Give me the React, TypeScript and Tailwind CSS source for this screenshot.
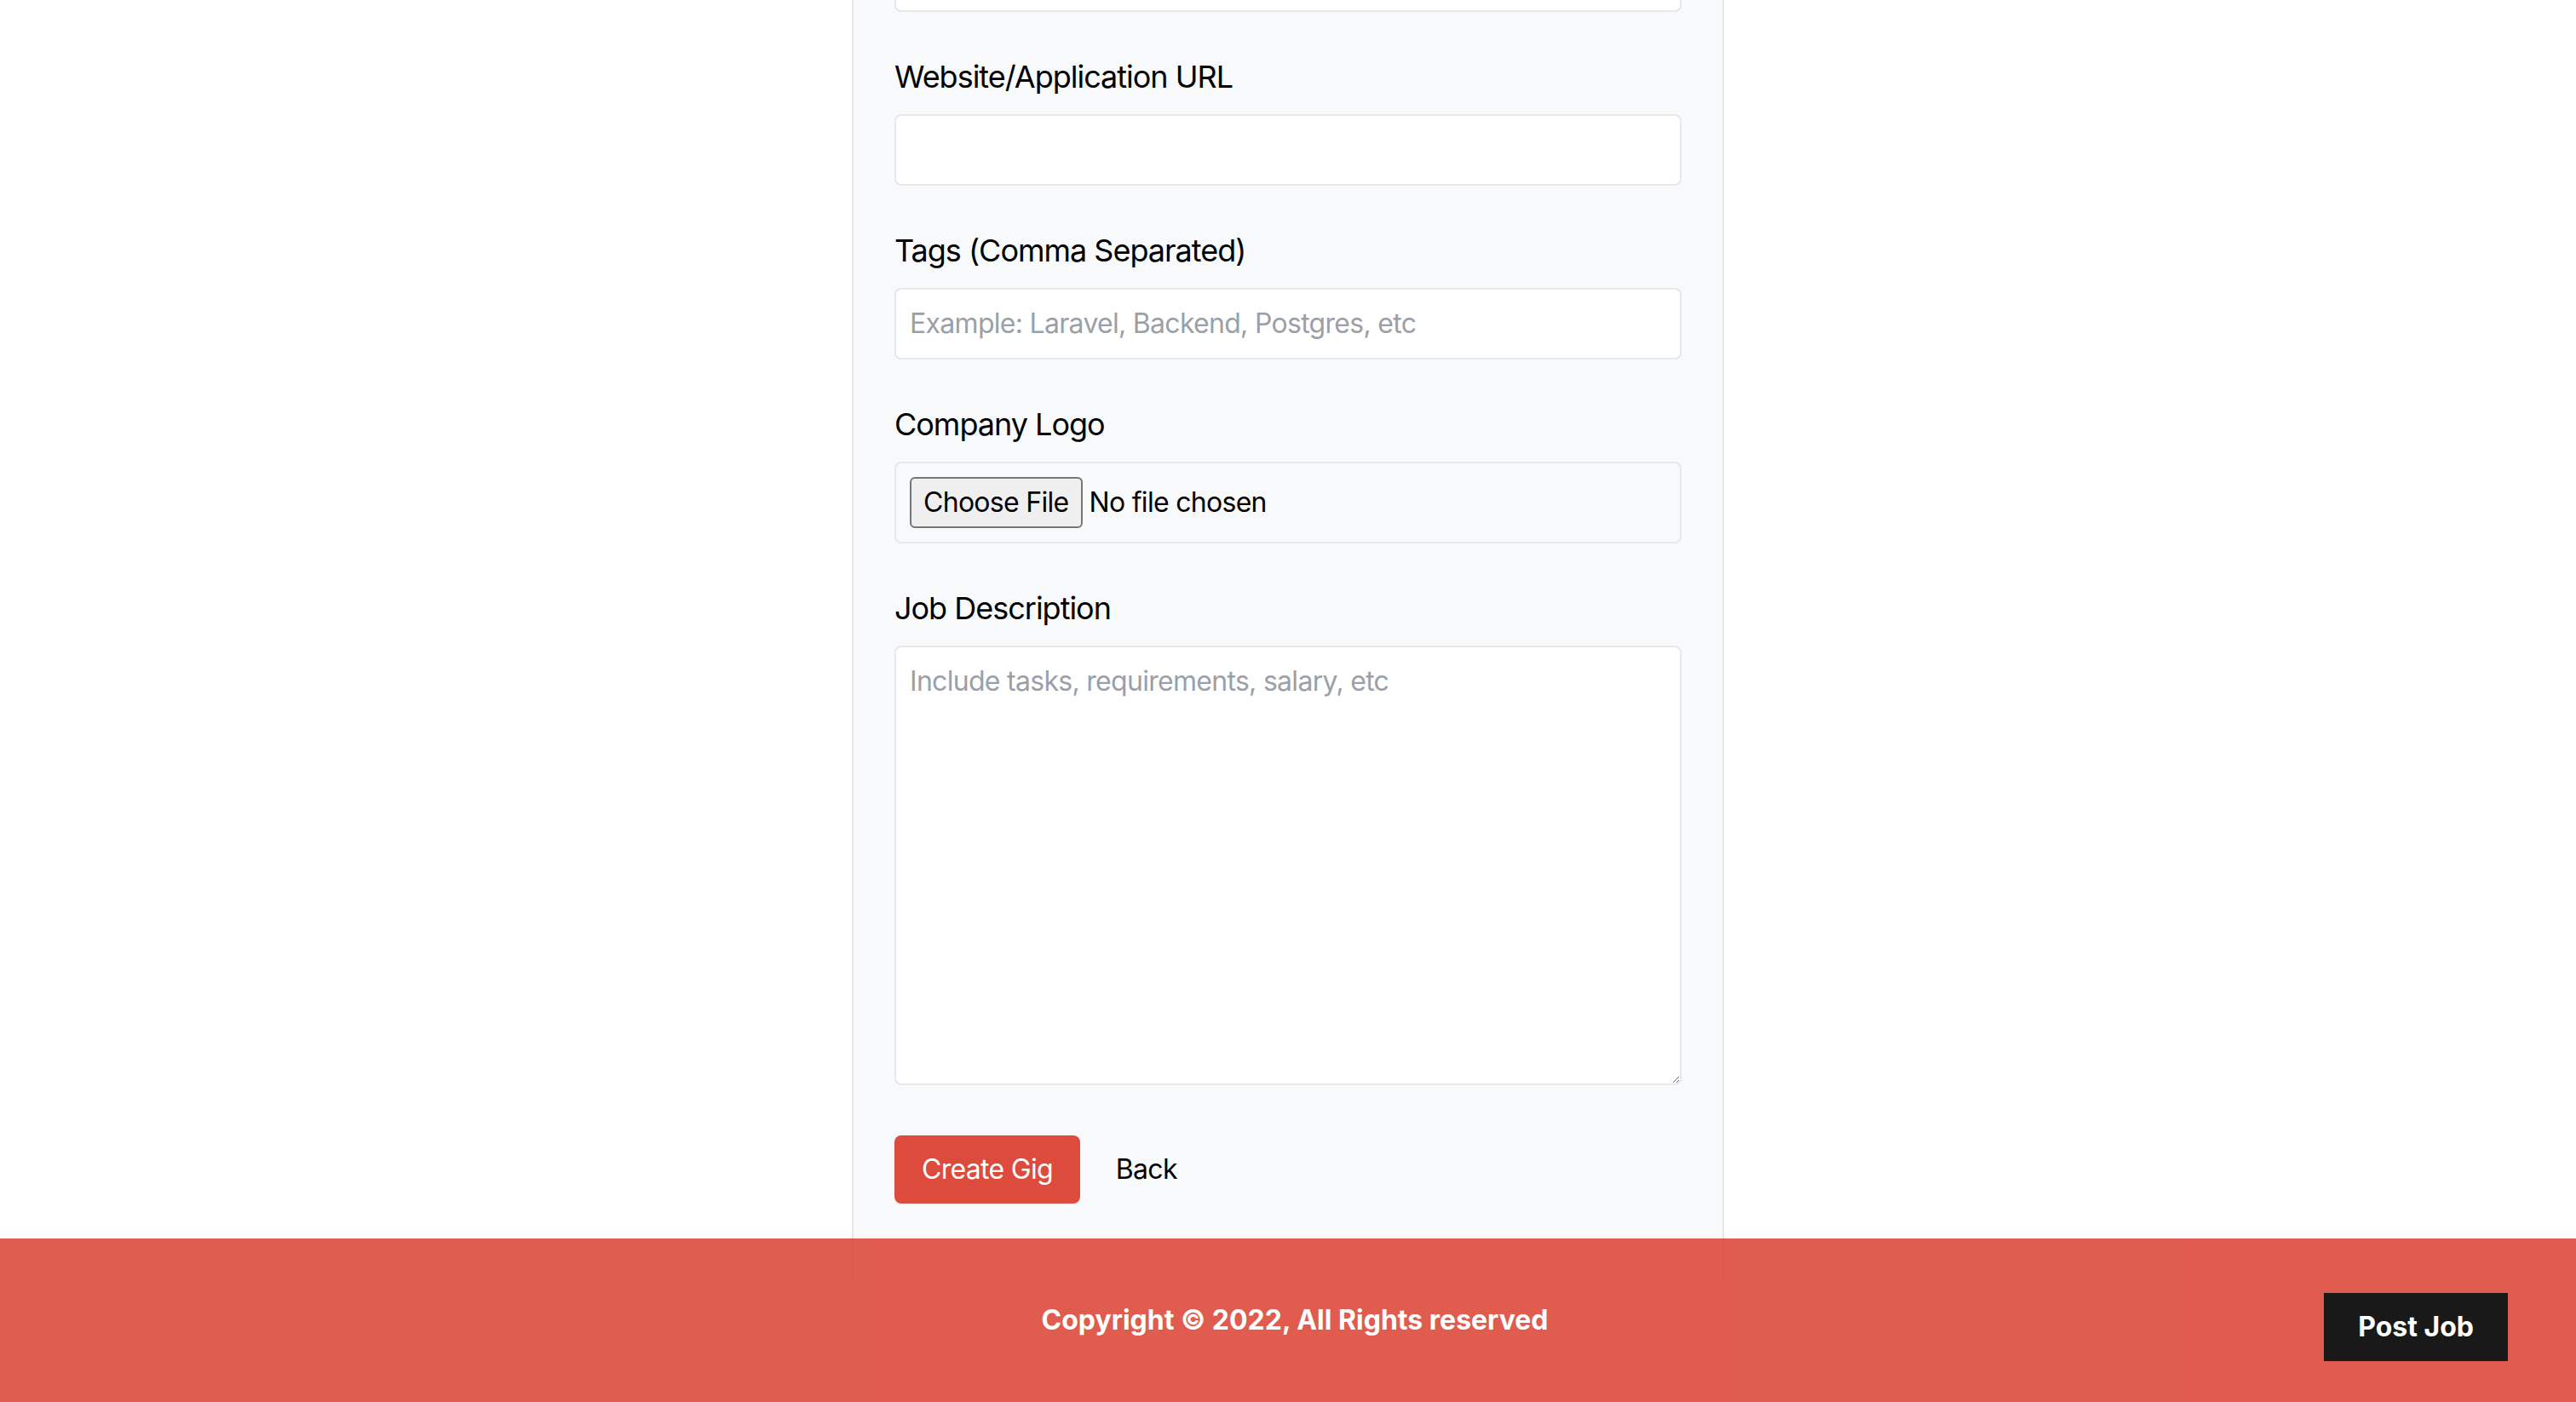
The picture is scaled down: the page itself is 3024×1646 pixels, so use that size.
import React from "react";

const inputClass =
  "block w-full border-2 border-[#e5e7eb] rounded-[8px] bg-white p-[16px] text-[32px] leading-[48px] text-black placeholder:text-[#9a9fa8] outline-none";

const Field = ({ label, children, last }: { label: string; children: React.ReactNode; last?: string }) => (
  <div className={last ?? "mb-[48px]"}>
    <label className="block text-[36px] leading-[56px] mb-[16px] text-black tracking-[-0.028em]">{label}</label>
    {children}
  </div>
);

const App = () => {
  return (
    <div
      className="relative h-[1646px] overflow-hidden bg-white flex flex-col justify-end text-[32px] leading-[48px] tracking-[-0.022em]"
      style={{ fontFamily: "Inter, 'Liberation Sans', sans-serif" }}
    >
      <main className="shrink-0">
        <div className="w-[1024px] mx-auto mb-[135px] bg-[#f8f9fa] border-2 border-[#e5e7eb] rounded-[8px] p-[48px]">
          <header className="text-center mb-[48px]">
            <h2 className="text-[48px] leading-[64px] font-bold uppercase mb-[8px]">Create a Gig</h2>
            <p className="mb-[32px]">Post a gig to find a developer</p>
          </header>

          <form>
            <Field label="Company Name">
              <input type="text" className={inputClass} />
            </Field>
            <Field label="Job Title">
              <input type="text" className={inputClass} placeholder="Example: Senior Laravel Developer" />
            </Field>
            <Field label="Job Location">
              <input type="text" className={inputClass} placeholder="Example: Remote, Boston MA, etc" />
            </Field>
            <Field label="Contact Email">
              <input type="text" className={inputClass} />
            </Field>
            <Field label="Website/Application URL">
              <input type="text" className={inputClass} />
            </Field>
            <Field label="Tags (Comma Separated)">
              <input type="text" className={inputClass} placeholder="Example: Laravel, Backend, Postgres, etc" />
            </Field>
            <Field label="Company Logo">
              <input
                type="file"
                className="block w-full border-2 border-[#e5e7eb] rounded-[8px] p-[16px] text-[32px] leading-[60px] text-black file:mr-[8px] file:px-[14px] file:py-[4px] file:leading-[48px] file:text-[32px] file:text-black file:bg-[#efefef] file:border-2 file:border-solid file:border-[#767676] file:rounded-[6px]"
              />
            </Field>
            <Field label="Job Description" last="mb-[59px]">
              <textarea
                rows={10}
                className={inputClass}
                placeholder="Include tasks, requirements, salary, etc"
              />
            </Field>

            <div className="mb-[48px] flex items-center">
              <button type="button" className="bg-[#dc4b3b] text-white rounded-[8px] py-[16px] px-[32px] hover:bg-black">
                Create Gig
              </button>
              <a href="/" className="text-black ml-[42px]">
                Back
              </a>
            </div>
          </form>
        </div>
      </main>

      <footer className="fixed bottom-0 left-0 w-full h-[192px] flex items-center justify-center font-bold bg-[#dc4b3b] text-white opacity-90 tracking-normal">
        <p className="ml-[16px]">Copyright &copy; 2022, All Rights reserved</p>
        <a href="/" className="absolute top-1/3 right-[80px] bg-black text-white py-[16px] px-[40px]">
          Post Job
        </a>
      </footer>
    </div>
  );
};

export default App;
